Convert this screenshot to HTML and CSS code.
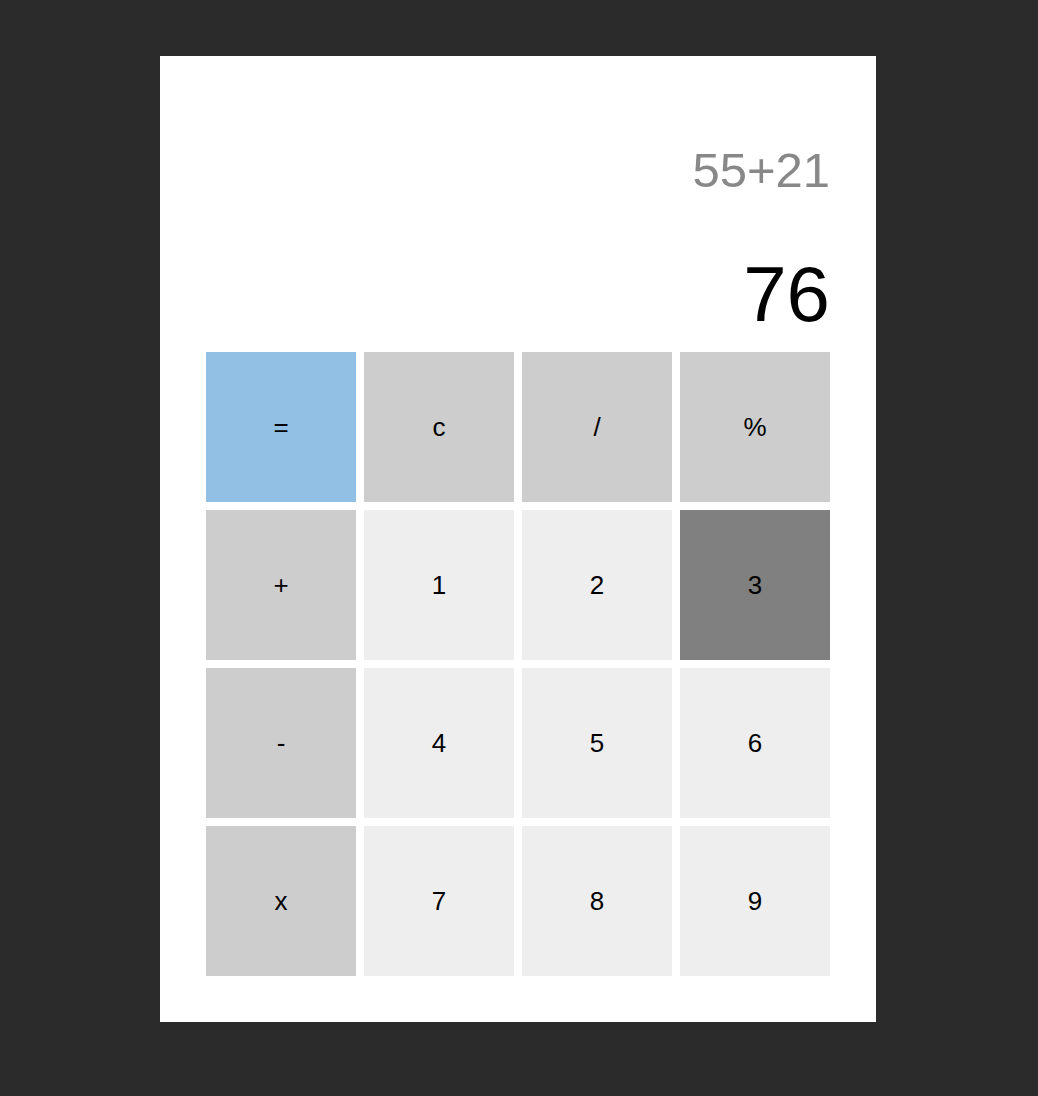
FILE: index.html
```html
<!DOCTYPE html>
<html>
<head>
<meta charset="utf-8">
<link rel="stylesheet" href="styles.css">
</head>
<body>
<div class="calc">
  <div class="display">
    <div class="expr">55+21</div>
    <div class="result">76</div>
  </div>
  <div class="keys">
    <div class="key eq">=</div>
    <div class="key op">c</div>
    <div class="key op">/</div>
    <div class="key op">%</div>
    <div class="key op">+</div>
    <div class="key num">1</div>
    <div class="key num">2</div>
    <div class="key active">3</div>
    <div class="key op">-</div>
    <div class="key num">4</div>
    <div class="key num">5</div>
    <div class="key num">6</div>
    <div class="key op">x</div>
    <div class="key num">7</div>
    <div class="key num">8</div>
    <div class="key num">9</div>
  </div>
</div>
</body>
</html>
```
FILE: styles.css
```css
html, body {
  margin: 0;
  padding: 0;
}
body {
  background: #2b2b2b;
  font-family: "Liberation Sans", Arial, sans-serif;
  padding-top: 56px;
  height: 1096px;
  box-sizing: border-box;
}
.calc {
  width: 716px;
  box-sizing: border-box;
  margin-left: 160px;
  background: #ffffff;
  padding: 46px;
}
.display {
  display: flex;
  flex-direction: column;
  align-items: flex-end;
  padding-top: 44px;
  gap: 60px;
  margin-bottom: 19px;
}
.expr {
  font-size: 49px;
  line-height: 49px;
  color: #888888;
}
.result {
  font-size: 78px;
  line-height: 78px;
  color: #000000;
}
.keys {
  display: grid;
  grid-template-columns: repeat(4, 150px);
  grid-auto-rows: 150px;
  gap: 8px;
}
.key {
  display: flex;
  align-items: center;
  justify-content: center;
  font-size: 26px;
  color: #000;
}
.eq { background: #92bfe4; }
.op { background: #cdcdcd; }
.num { background: #eeeeee; }
.active { background: #808080; }
```
